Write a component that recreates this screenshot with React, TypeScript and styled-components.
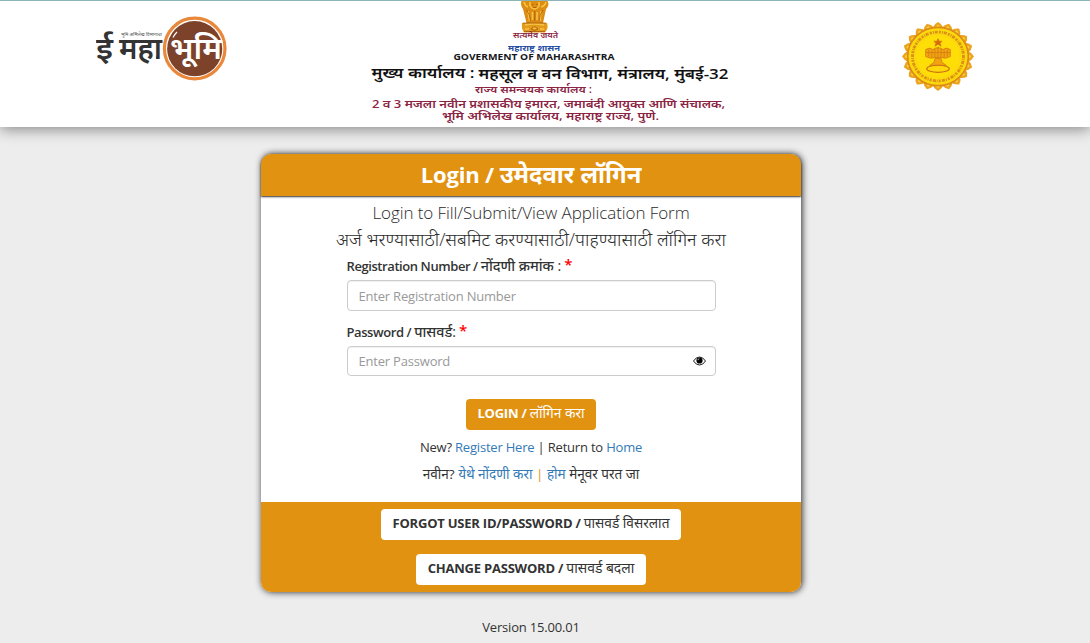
import React from 'react';
import styled, { createGlobalStyle } from 'styled-components';

const sans = `'Open Sans', 'Noto Sans', 'Noto Sans Devanagari', sans-serif`;

const Global = createGlobalStyle`
  * { box-sizing: border-box; }
  body { margin: 0; background: #ededed; color: #333; font: 13px/20px ${sans}; overflow: hidden; }
`;

const Page = styled.div`
  height: 643px;
  display: flex;
  flex-direction: column;
`;
const Header = styled.header`
  flex: none;
  height: 127px;
  padding: 0 115px 0 96px;
  display: flex;
  background: #fff;
  border-top: 1px solid #8db4b7;
  box-shadow: 0 2px 14px rgba(0, 0, 0, 0.45);
`;
const LogoArt = styled.svg<{ $top: number; $left?: number }>`
  display: block;
  flex: none;
  margin-top: ${p => p.$top}px;
  margin-left: ${p => p.$left ?? 0}px;
`;
const Main = styled.main`
  width: 540px;
  margin: 27px 0 0 261px;
  display: flex;
  flex-direction: column;
  align-items: stretch;
`;
const Card = styled.section`
  height: 438px;
  background: #fff;
  border-radius: 10px;
  box-shadow: 1px 0 7px rgba(0, 0, 0, 0.85);
  display: flex;
  flex-direction: column;
`;
const Title = styled.h1`
  margin: 0;
  height: 42px;
  flex: none;
  display: flex;
  align-items: baseline;
  justify-content: center;
  background: #e29211;
  color: #fff;
  font-size: 22px;
  line-height: 41px;
  font-weight: 700;
  letter-spacing: -0.15px;
  white-space: pre;
  border-radius: 10px 10px 0 0;
  box-shadow: 0 1px 2px rgba(0, 0, 0, 0.8);
`;
const Deva = styled.span<{ $size: number; $weight?: number }>`
  font-size: ${p => p.$size}px;
  font-weight: ${p => p.$weight ?? 400};
  letter-spacing: 0;
  line-height: 1;
`;
const Body = styled.div`
  flex: 1;
  display: flex;
  flex-direction: column;
  align-items: center;
`;
const Intro = styled.p<{ $height: number; $line: number }>`
  margin: 0;
  height: ${p => p.$height}px;
  line-height: ${p => p.$line}px;
  font-size: 17px;
  font-weight: 350;
  letter-spacing: -0.08px;
  color: #2b2b2b;
  white-space: pre;
`;
const Form = styled.form`
  width: 369px;
  display: flex;
  flex-direction: column;
`;
const Label = styled.label`
  height: 27px;
  line-height: 27px;
  font-weight: 560;
  font-size: 13px;
  letter-spacing: -0.42px;
  white-space: pre;
  color: #333;
`;
const Star = styled.span`
  color: #f00;
  font-size: 15px;
  font-weight: 600;
  line-height: 1;
  vertical-align: 1px;
`;
const Field = styled.div<{ $height: number; $after: number }>`
  height: ${p => p.$height}px;
  margin-bottom: ${p => p.$after}px;
  padding: 0 9px 0 11px;
  border: 1px solid #ccc;
  border-radius: 4px;
  background: #fff;
  display: flex;
  align-items: center;
  box-shadow: inset 0 1px 1px rgba(0, 0, 0, 0.06);
`;
const Input = styled.input`
  flex: 1;
  min-width: 0;
  padding: 0;
  border: 0;
  outline: 0;
  background: transparent;
  font: 13px/20px ${sans};
  letter-spacing: -0.2px;
  &::placeholder { color: #999; opacity: 1; }
`;
const Button = styled.button<{ $width: number; $primary?: boolean }>`
  width: ${p => p.$width}px;
  height: 31px;
  padding: 0 0 3px;
  border: 0;
  border-radius: 4px;
  background: ${p => (p.$primary ? '#e29211' : '#fff')};
  color: ${p => (p.$primary ? '#fff' : '#333')};
  font: 700 13px/28px ${sans};
  letter-spacing: -0.22px;
  white-space: pre;
`;
const Links = styled.p<{ $top: number }>`
  margin: ${p => p.$top}px 0 0;
  height: 20px;
  line-height: 20px;
  letter-spacing: -0.2px;
  white-space: pre;
`;
const Link = styled.a`
  color: #337ab7;
  text-decoration: none;
`;
const Divider = styled.span`
  color: #e29211;
`;
const Footer = styled.footer`
  flex: none;
  height: 90px;
  padding-top: 7px;
  display: flex;
  flex-direction: column;
  align-items: center;
  gap: 14px;
  background: #e29211;
  border-radius: 0 0 10px 10px;
`;
const Version = styled.p`
  margin: 25px 0 0;
  text-align: center;
  letter-spacing: -0.18px;
`;

const BhumiLogo = () => (
  <LogoArt width="134" height="70" viewBox="96 14 134 70" $top={13}>
    <g fontFamily={sans} fontWeight="600">
      <text x="96" y="59" fontSize="31" fill="#333" textLength="17" lengthAdjust="spacingAndGlyphs">ई</text>
      <text x="119" y="59" fontSize="31" fill="#333" textLength="43" lengthAdjust="spacingAndGlyphs">महा</text>
      <circle cx="157.500" cy="57.500" r="1.500" fill="#333" />
      <text x="121" y="35.500" fontSize="4.500" fontWeight="400" fill="#555" textLength="41" lengthAdjust="spacingAndGlyphs">भूमि अभिलेख विभागाचा</text>
      <circle cx="194.700" cy="48.500" r="30.300" fill="#fff" stroke="#e9873a" strokeWidth="3.200" />
      <circle cx="194.700" cy="48.700" r="27.600" fill="#7d432a" />
      <path d="M173 37.500 Q174.500 34.500 177 32" stroke="#fff" strokeWidth="1.200" fill="none" />
      <text x="170" y="59" fontSize="30" fontWeight="600" fill="#fff" textLength="52" lengthAdjust="spacingAndGlyphs">भूमि</text>
    </g>
  </LogoArt>
);

const Banner = () => (
  <LogoArt width="360" height="126" viewBox="370 1 360 126" $top={0} $left={140}>
    <path d="M521.500 1 Q520 5 523 9 L526.500 23 H543 L546 9 Q550 5 547.500 1Z" fill="#dd8d12" />
    <path d="M522 23 Q521 28 524 32.500 H545 Q549 28 547 23Z" fill="#e39b1c" />
    <g fill="none" stroke="#f7c344" strokeWidth="1.600">
      <path d="M524 2 Q525 6 528 7 M546 2 Q545 6 541 7 M530 2 Q529 8 534.500 9 Q540 8 539 2 M528 11 L529.500 21 M541 11 L540 21 M532.500 12 V20 M537 12 V20" />
      <path d="M525 25 Q534 23 544 25 M533 28 H536.500 M525 29 H529 M540 29 H544" />
    </g>
    <g fill="none" stroke="#9c5207" strokeWidth="0.700">
      <path d="M526.500 10 Q530 14 530.500 21 M543 10 Q539.500 14 539 21 M534.700 11 V21 M532 4.500 H533.500 M536 4.500 H537.500 M533 7.500 H536.500" />
      <path d="M523 23 H546 M531 29 Q534.500 24.500 538 29 Q534.500 32 531 29 M524 31.500 H545" />
    </g>
    <g fontFamily={sans} fontWeight="700">
      <text x="513" y="38" fontSize="7.500" fontWeight="600" fill="#8a2442" textLength="45" lengthAdjust="spacingAndGlyphs">सत्यमेव जयते</text>
      <text x="508" y="51" fontSize="8.500" fill="#2950a3" textLength="52" lengthAdjust="spacingAndGlyphs">महाराष्ट्र शासन</text>
      <text x="453.500" y="60" fontSize="8" fill="#17171c" textLength="161" lengthAdjust="spacingAndGlyphs">GOVERMENT OF MAHARASHTRA</text>
      <text x="371.500" y="78" fontSize="15" fontWeight="600" fill="#111" textLength="103" lengthAdjust="spacingAndGlyphs">मुख्य कार्यालय :</text>
      <text x="478.500" y="79" fontSize="15" fontWeight="600" fill="#111" textLength="250" lengthAdjust="spacingAndGlyphs">महसूल व वन विभाग, मंत्रालय, मुंबई-32</text>
      <text x="475" y="93" fontSize="10" fontWeight="600" fill="#8a2442" textLength="117" lengthAdjust="spacingAndGlyphs">राज्य समन्वयक कार्यालय :</text>
      <text x="372" y="108" fontSize="11.500" fontWeight="600" fill="#8a2442" textLength="353" lengthAdjust="spacingAndGlyphs">2 व 3 मजला नवीन प्रशासकीय इमारत, जमाबंदी आयुक्त आणि संचालक,</text>
      <text x="442" y="120" fontSize="11.500" fontWeight="600" fill="#8a2442" textLength="217" lengthAdjust="spacingAndGlyphs">भूमि अभिलेख कार्यालय, महाराष्ट्र राज्य, पुणे.</text>
    </g>
  </LogoArt>
);

const StateSeal = () => {
  const petals = Array.from({ length: 20 }, (_, i) => i * 18);
  return (
    <LogoArt width="74" height="71" viewBox="-36 -36 72 72" preserveAspectRatio="none" $top={20} $left={171}>
      {petals.map(a => (
        <g key={a} transform={`rotate(${a})`}>
          <path d="M-5.500 -29 Q-4 -33 0 -35 Q4 -33 5.500 -29Z" fill="#eba321" />
          <circle cy="-30.500" r="1.500" fill="#f8d23c" />
        </g>
      ))}
      <circle r="29.500" fill="#fbd90c" stroke="#dd8a18" strokeWidth="1.600" />
      <circle r="24.800" fill="none" stroke="#dd9018" strokeWidth="2.800" strokeDasharray="2 1 1 0.800 3 1.200" />
      <circle r="21" fill="#ffde08" />
      <g fill="#f2a310" stroke="#d27c14" strokeWidth="0.800">
        <path d="M0 -18 L1.200 -15.500 H4 L2 -13.500 L3 -10.500 L0 -12.500 L-3 -10.500 L-2 -13.500 L-4 -15.500 H-1.200Z" fill="#d8690f" />
        <path d="M-12 -7 Q-8 -10 -5 -7 Q0 -11 5 -7 Q8 -10 12 -7 V0 Q7 3 3 1 H-3 Q-7 3 -12 0Z" />
        <path d="M-9 -7 V0 M-6 -6 V1 M-3 -8 V1 M0 -10 V2 M3 -8 V1 M6 -6 V1 M9 -7 V0 M-12 -4 H12" />
        <path d="M-3 2 H3 L4 6 L8 9 H-8 L-4 6Z" />
        <ellipse cy="12.500" rx="11" ry="3.600" fill="#ffd80b" stroke="#cc7012" strokeWidth="1.100" />
      </g>
    </LogoArt>
  );
};

const Eye = () => (
  <svg width="13" height="10" viewBox="0 0 13 10">
    <path d="M0.500 5 Q3 1 6.500 1 Q10 1 12.500 5 Q10 9 6.500 9 Q3 9 0.500 5Z" fill="#fff" stroke="#000" strokeWidth="0.900" />
    <circle cx="6.500" cy="4.500" r="3.100" fill="#000" />
    <path d="M4.900 4.200 Q5 2.900 6.300 2.800" stroke="#fff" strokeWidth="0.700" fill="none" />
  </svg>
);

export default function App() {
  return (
    <Page>
      <Global />
      <Header>
        <BhumiLogo />
        <Banner />
        <StateSeal />
      </Header>
      <Main>
        <Card>
          <Title>Login / <Deva $size={23.8} $weight={700}>उमेदवार लॉगिन</Deva></Title>
          <Body>
            <Intro $height={33} $line={33}>Login to Fill/Submit/View Application Form</Intro>
            <Intro $height={24} $line={21}><Deva $size={18.2} $weight={350}>अर्ज भरण्यासाठी/सबमिट करण्यासाठी/पाहण्यासाठी लॉगिन करा</Deva></Intro>
            <Form>
              <Label>Registration Number / <Deva $size={14.3} $weight={500}>नोंदणी क्रमांक :</Deva> <Star>*</Star></Label>
              <Field $height={31} $after={8}><Input placeholder="Enter Registration Number" /></Field>
              <Label>Password / <Deva $size={14.3} $weight={500}>पासवर्ड:</Deva> <Star>*</Star></Label>
              <Field $height={30} $after={23}><Input type="password" placeholder="Enter Password" /><Eye /></Field>
            </Form>
            <Button $width={130} $primary>LOGIN / <Deva $size={13.7}>लॉगिन करा</Deva></Button>
            <Links $top={7}>New? <Link>Register Here</Link> | Return to <Link>Home</Link></Links>
            <Links $top={7}><Deva $size={13.5}>नवीन? <Link>येथे नोंदणी करा</Link> <Divider>|</Divider> <Link>होम</Link> मेनूवर परत जा</Deva></Links>
          </Body>
          <Footer>
            <Button $width={300}>FORGOT USER ID/PASSWORD / <Deva $size={13.7}>पासवर्ड विसरलात</Deva></Button>
            <Button $width={230}>CHANGE PASSWORD / <Deva $size={13.9}>पासवर्ड बदला</Deva></Button>
          </Footer>
        </Card>
        <Version>Version 15.00.01</Version>
      </Main>
    </Page>
  );
}
